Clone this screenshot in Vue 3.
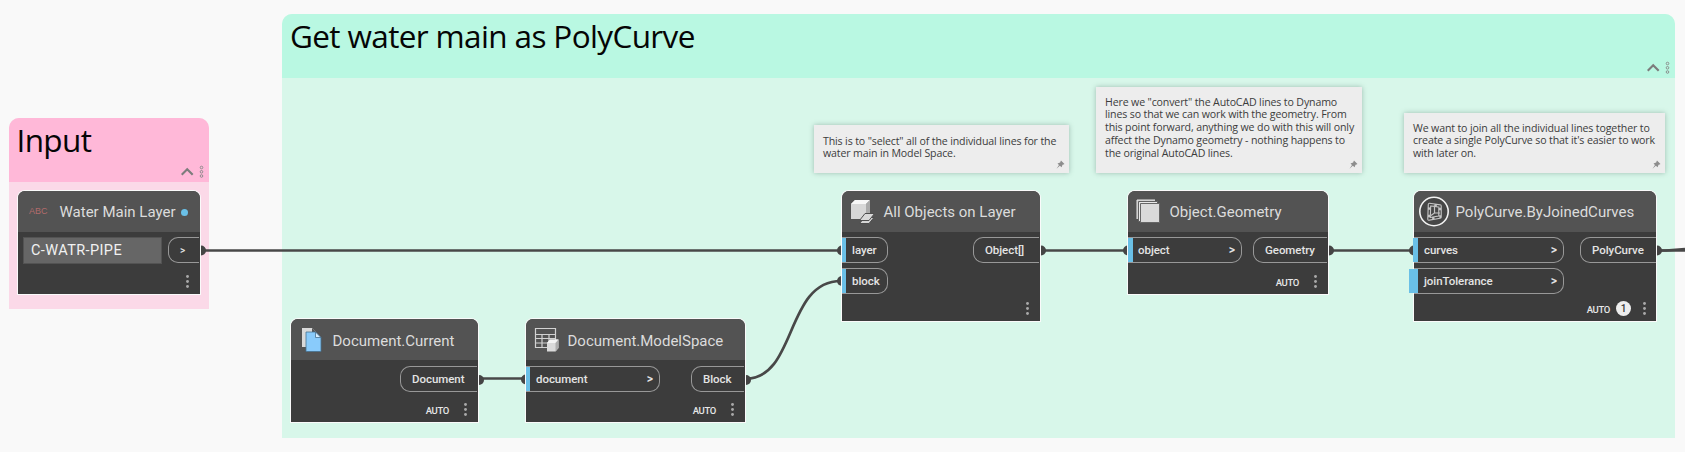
<script setup>
const groups = [
  { id: 'input', title: 'Input', x: 9, y: 118, w: 200, h: 191 },
  { id: 'main', title: 'Get water main as PolyCurve', x: 282, y: 14, w: 1393, h: 424 },
]

const notes = [
  { x: 814, y: 125, w: 255, h: 48, lines: ['This is to "select" all of the individual lines for the', 'water main in Model Space.'] },
  {
    x: 1096, y: 87, w: 266, h: 85.5, tight: true,
    lines: [
      'Here we "convert" the AutoCAD lines to Dynamo',
      'lines so that we can work with the geometry. From',
      'this point forward, anything we do with this will only',
      'affect the Dynamo geometry - nothing happens to',
      'the original AutoCAD lines.',
    ],
  },
  {
    x: 1404, y: 113, w: 261, h: 60, tight: true,
    lines: ['We want to join all the individual lines together to', "create a single PolyCurve so that it's easier to work", 'with later on.'],
  },
]

const nodes = [
  { id: 'water', title: 'Water Main Layer', x: 18, y: 191, w: 182, h: 103, value: 'C-WATR-PIPE', inputs: [], out: '>', outW: 31 },
  { id: 'current', title: 'Document.Current', x: 291, y: 319, w: 187, h: 103, inputs: [], out: 'Document', outW: 77, auto: true },
  { id: 'space', title: 'Document.ModelSpace', x: 526, y: 319, w: 219, h: 103, inputs: [{ name: 'document', w: 134, arrow: true }], out: 'Block', outW: 53, auto: true },
  { id: 'layer', title: 'All Objects on Layer', x: 842, y: 191, w: 198, h: 130, inputs: [{ name: 'layer', w: 46 }, { name: 'block', w: 46 }], out: 'Object[]', outW: 66 },
  { id: 'geometry', title: 'Object.Geometry', x: 1128, y: 191, w: 200, h: 103, inputs: [{ name: 'object', w: 114, arrow: true }], out: 'Geometry', outW: 74, auto: true },
  {
    id: 'poly', title: 'PolyCurve.ByJoinedCurves', x: 1414, y: 191, w: 242, h: 130,
    inputs: [{ name: 'curves', w: 150, arrow: true }, { name: 'joinTolerance', w: 150, arrow: true, wide: true }],
    out: 'PolyCurve', outW: 76, auto: true, badge: '1',
  },
]

const wires = [
  'M201 250.5H841',
  'M479 378.5H525',
  'M746 378.5C797 378.5 785 281 841 281',
  'M1041 250.5H1127',
  'M1329 250.5H1413',
  'M1657 250.5H1668L1685 250.3',
  'M1657 250.5H1666L1685 249',
]
const ends = [[201, 250.5], [479, 380], [746, 380], [1041, 250.5], [1329, 250.5], [1657, 250.5], [842, 250.5], [842, 281], [526, 379.5], [1128, 250.5], [1414, 250.5]]

const box = (o) => ({ left: o.x + 'px', top: o.y + 'px', width: o.w + 'px', height: o.h + 'px' })
</script>

<template>
  <main class="canvas">
    <section v-for="g in groups" :key="g.id" class="group" :class="g.id" :style="box(g)">
      <header>
        <h2>{{ g.title }}</h2>
        <svg class="group-tools" width="24" height="14" viewBox="0 0 24 14">
          <path d="M.7 9.8L6.200 4.300L11.700 9.800" fill="none" stroke="#7c7c7c" stroke-width="2.200" />
          <g fill="none" stroke="#878787" stroke-width=".9">
            <circle cx="20.500" cy="2.500" r="1.300" /><circle cx="20.500" cy="6.800" r="1.300" /><circle cx="20.500" cy="11" r="1.300" />
          </g>
        </svg>
      </header>
    </section>

    <svg class="wires" width="1685" height="452" viewBox="0 0 1685 452">
      <path v-for="d in wires" :key="d" :d="d" />
      <circle v-for="(p, i) in ends" :key="i" :cx="p[0]" :cy="p[1]" r="5" />
    </svg>

    <aside v-for="(n, i) in notes" :key="i" class="note" :class="{ tight: n.tight }" :style="box(n)">
      <p v-for="l in n.lines" :key="l">{{ l }}</p>
      <svg class="pin" width="9" height="9" viewBox="0 0 9 9">
        <path d="M5 .5L8.500 4L7.500 4.500L6.500 4.700L5.600 7.300L3.800 5.800L.5 8.800L3 5L1.500 3.400L4.200 2.500L4.500 1.500Z" fill="#8d8d8d" />
      </svg>
    </aside>

    <article v-for="n in nodes" :key="n.id" class="node" :class="n.id" :style="box(n)">
      <header>
        <span class="icon">
          <span v-if="n.id === 'water'" class="abc">ABC</span>
          <svg v-else-if="n.id === 'current'" width="32" height="32" viewBox="0 0 32 32">
            <path d="M7 5H17L21 9V24H7Z" fill="#d9d9d9" />
            <path d="M17 5V9H21Z" fill="#555" />
            <path d="M11 9H20.500L26 14.500V28.500H11Z" fill="#89cbfb" stroke="#48718f" stroke-width=".8" />
            <path d="M20.500 9V14.500H26Z" fill="#d8eefe" stroke="#48718f" stroke-width=".8" />
            <path d="M21 8.500L26.500 14V8.500Z" fill="#535353" />
          </svg>
          <svg v-else-if="n.id === 'space'" width="32" height="32" viewBox="0 0 32 32">
            <path d="M5.500 5.500H25.500V24.500H5.500ZM5.500 11.500H25.500M5.500 15.500H25.500M5.500 20H25.500M12 11.500V24.500M19 11.500V24.500" fill="none" stroke="#d2d2d2" stroke-width="1.200" />
            <path d="M17 20L20 16.500H28.500V25L25.500 28.500H17Z" fill="#dadada" />
            <path d="M17 20L20 16.500H28.500L25.500 20Z" fill="#f4f4f4" />
            <path d="M25.500 20L28.500 16.500V25L25.500 28.500Z" fill="#adadad" />
          </svg>
          <svg v-else-if="n.id === 'layer'" width="32" height="32" viewBox="0 0 32 32">
            <path d="M5 9L9 5H24L20 9V24H5Z" fill="#d7d7d7" />
            <path d="M5 9L9 5H24L20 9Z" fill="#f7f7f7" />
            <path d="M20 9L24 5V20L20 24Z" fill="#aaa" />
            <path d="M13.500 28.500L18.500 22.500H28L23 28.500Z" fill="#d5d5d5" stroke="#4d4d4d" />
            <path d="M13.500 25.500L19 18.500H28.500L23 25.500Z" fill="#d9d9d9" stroke="#4d4d4d" />
          </svg>
          <svg v-else-if="n.id === 'geometry'" width="32" height="32" viewBox="0 0 32 32">
            <path d="M5 5H23V24H5Z" fill="#bdbdbd" /><path d="M5 24V5H23" fill="none" stroke="#e8e8e8" />
            <path d="M6.500 6.500H25.500V26.500H6.500Z" fill="#bdbdbd" stroke="#606060" /><path d="M7.500 26V7.500H25" fill="none" stroke="#e8e8e8" />
            <path d="M8.500 8.500H27.500V27.500H8.500Z" fill="#dadada" stroke="#666" />
          </svg>
          <svg v-else width="32" height="32" viewBox="0 0 32 32">
            <circle cx="16" cy="16.500" r="14.200" fill="#464646" stroke="#f2f2f2" stroke-width="1.600" />
            <path d="M11.500 9.500L22 11V22L11 24Z" fill="none" stroke="#c4c4c4" stroke-width="3.600" stroke-linejoin="round" />
            <path d="M11.500 9.500L22 11V22L11 24Z" fill="none" stroke="#444" stroke-width="1.300" stroke-dasharray="5 2.400" />
            <path d="M16.500 10.500V18L13 20.500M16.500 18H22" fill="none" stroke="#c4c4c4" stroke-width="1.200" />
          </svg>
        </span>
        <h3>{{ n.title }}</h3>
        <i v-if="n.id === 'water'" class="state"></i>
      </header>
      <div class="ports">
        <div class="inputs">
          <div v-if="n.value" class="value">{{ n.value }}</div>
          <div v-for="p in n.inputs" :key="p.name" class="port in" :class="{ wide: p.wide }" :style="{ width: p.w + 'px' }">
            <span>{{ p.name }}</span><b v-if="p.arrow">&gt;</b>
          </div>
        </div>
        <div class="port out" :style="{ width: n.outW + 'px' }"><span>{{ n.out }}</span></div>
      </div>
      <footer>
        <span v-if="n.auto" class="auto">AUTO</span>
        <span v-if="n.badge" class="badge">{{ n.badge }}</span>
        <svg width="3" height="13" viewBox="0 0 3 13" fill="#a9a9a9"><circle cx="1.500" cy="1.500" r="1.450" /><circle cx="1.500" cy="6.500" r="1.450" /><circle cx="1.500" cy="11.500" r="1.450" /></svg>
      </footer>
    </article>
  </main>
</template>

<style>
html, body { margin: 0; overflow: hidden; background: #f9f9f9; }
</style>

<style scoped>
* { box-sizing: border-box; }
h2, h3, p { margin: 0; font-weight: 400; }
.canvas { position: relative; width: 1685px; height: 452px; overflow: hidden; background: #f9f9f9; }
.group, .note, .node, .wires { position: absolute; }
.wires { left: 0; top: 0; }
.wires path { fill: none; stroke: #484848; stroke-width: 2.7; }
.wires circle { fill: #454545; }

.group { border-radius: 10px 10px 0 0; overflow: hidden; }
.group header { position: relative; height: 64px; padding-left: 8px; }
.group h2 { font: 400 31.5px/43px "Open Sans", "Noto Sans", sans-serif; letter-spacing: -.63px; color: #050505; white-space: nowrap; }
.group.input { background: #fbd9e8; }
.group.input header { padding-left: 7.500px; background: #ffb8d8; }
.group.main { background: #d8f7ea; }
.group.main header { background: #b9f8e2; }
.group-tools { position: absolute; right: 4px; top: 47px; }

.note { padding: 9.5px 0 0 9px; background: #ededed; box-shadow: 0 0 5px rgba(70, 100, 90, .4); }
.note.tight { padding-top: 8.500px; }
.note p { font: 400 10.6px/12.8px "Open Sans", "Noto Sans", sans-serif; letter-spacing: -.14px; color: #3c3c3c; white-space: nowrap; }
.pin { position: absolute; right: 4px; bottom: 4px; }

.node { display: flex; flex-direction: column; background: #3c3c3c; border-radius: 7px 7px 0 0; box-shadow: 0 0 0 1px #fafafa; font-family: Roboto, "Noto Sans", sans-serif; }
.node header { display: flex; align-items: center; height: 41px; flex: none; padding-left: 4px; background: #535353; border-radius: 7px 7px 0 0; }
.icon { display: flex; width: 37.500px; height: 41px; padding-top: 4px; flex: none; }
.abc { margin: 11px 0 0 7px; font: 400 9px/10px "Liberation Sans", sans-serif; color: #b26b6b; }
.node h3 { padding-top: 1px; font-size: 15px; line-height: 20px; color: #dcdcdc; white-space: nowrap; }
.current h3, .space h3 { padding-top: 3px; }
.state { width: 7px; height: 7px; margin: 2px 0 0 6px; border-radius: 50%; background: #6ac0e7; }
.ports { display: flex; justify-content: space-between; padding-top: 5px; flex: 1; }
.current .ports, .space .ports { padding-top: 6px; }
.inputs { display: flex; flex-direction: column; gap: 5px; }
.port { position: relative; display: flex; align-items: center; height: 26px; border: 1px solid #989898; font-weight: 500; font-size: 11.500px; letter-spacing: -.05px; color: #e4e4e4; white-space: nowrap; }
.port.in { justify-content: space-between; padding: 0 6px 0 10px; border-left: 0; border-radius: 0 10px 10px 0; }
.port.in::before { content: ""; position: absolute; left: 0; top: 0; width: 4px; height: 24px; background: #6ac0e7; }
.geometry .port.in::before { width: 5px; }
.poly .port.in::before { left: -1px; width: 5px; }
.poly .port.in.wide::before { left: -5px; width: 9px; }
.port b { font-size: 12px; font-weight: 600; }
.port.out { justify-content: flex-start; padding-left: 11px; border-right: 0; border-radius: 10px 0 0 10px; margin-right: 1px; }
.poly .port.out { margin-right: 0; }
.water .port.out { font-size: 10px; }
.value { width: 139px; height: 27px; margin-left: 5px; padding-left: 7px; border: 1px solid #535353; background: #666; color: #f1f1f1; font-size: 14.500px; line-height: 25px; letter-spacing: .4px; }
footer { display: flex; justify-content: flex-end; align-items: center; height: 25px; flex: none; padding-right: 11px; }
.auto { margin-right: 15px; padding-top: 1px; font-weight: 500; font-size: 9.500px; color: #e8e8e8; letter-spacing: -.35px; }
.badge { width: 15px; height: 15px; margin: 0 12px 0 -9px; border-radius: 50%; background: #ededed; color: #333; font-weight: 500; font-size: 10px; line-height: 15px; text-align: center; }
.poly footer { padding-right: 10px; }
</style>
